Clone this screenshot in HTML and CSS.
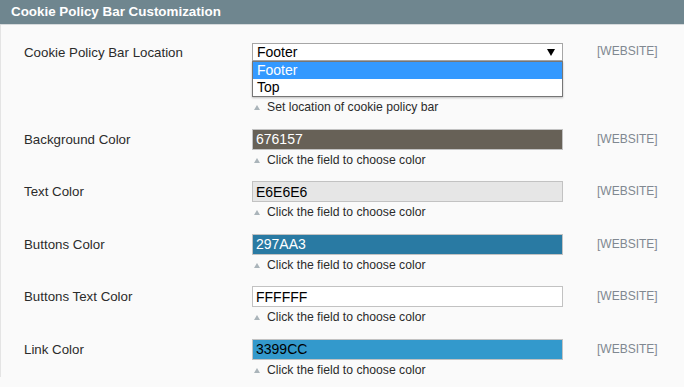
FILE: index.html
```html
<!DOCTYPE html>
<html lang="en">
<head>
    <meta charset="UTF-8">
    <title>Cookie Policy Bar Customization</title>
    <link rel="stylesheet" href="styles.css">
</head>
<body>
<header class="section-head">Cookie Policy Bar Customization</header>
<div class="section-body">
    <div class="row">
        <label class="label label-select">Cookie Policy Bar Location</label>
        <div class="field">
            <div class="select">
                <span>Footer</span>
                <svg class="arrow" width="8" height="7" viewBox="0 0 8 7"><path d="M0 0H8L4 7Z" fill="#000"/></svg>
            </div>
            <ul class="options">
                <li class="active">Footer</li>
                <li>Top</li>
            </ul>
            <p class="note">Set location of cookie policy bar</p>
        </div>
        <span class="scope scope-select">[WEBSITE]</span>
    </div>
    <div class="row">
        <label class="label">Background Color</label>
        <div class="field">
            <input class="color light-text" type="text" value="676157" style="background-color:#676157">
            <p class="note">Click the field to choose color</p>
        </div>
        <span class="scope">[WEBSITE]</span>
    </div>
    <div class="row">
        <label class="label">Text Color</label>
        <div class="field">
            <input class="color" type="text" value="E6E6E6" style="background-color:#E6E6E6">
            <p class="note">Click the field to choose color</p>
        </div>
        <span class="scope">[WEBSITE]</span>
    </div>
    <div class="row">
        <label class="label">Buttons Color</label>
        <div class="field">
            <input class="color light-text" type="text" value="297AA3" style="background-color:#297AA3">
            <p class="note">Click the field to choose color</p>
        </div>
        <span class="scope">[WEBSITE]</span>
    </div>
    <div class="row">
        <label class="label">Buttons Text Color</label>
        <div class="field">
            <input class="color" type="text" value="FFFFFF" style="background-color:#FFFFFF">
            <p class="note">Click the field to choose color</p>
        </div>
        <span class="scope">[WEBSITE]</span>
    </div>
    <div class="row">
        <label class="label">Link Color</label>
        <div class="field">
            <input class="color" type="text" value="3399CC" style="background-color:#3399CC">
            <p class="note">Click the field to choose color</p>
        </div>
        <span class="scope">[WEBSITE]</span>
    </div>
</div>
</body>
</html>
```

FILE: styles.css
```css
/* page */
body {
    margin: 0;
    background-color: #fafafa;
    font-family: "Liberation Sans", Arial, sans-serif;
    color: #2b2b2b;
    overflow: hidden;
}

.section-head {
    height: 24px;
    line-height: 24px;
    padding-left: 11px;
    background-color: #6f868f;
    border-bottom: 1px solid #d6dadc;
    color: #fff;
    font-size: 13.4px;
    font-weight: bold;
}

.section-body {
    padding: 18px 0 0 23px;
    border-left: 1px solid #e4e4e4;
}

.row {
    display: grid;
    grid-template-columns: 228px 311px 34px auto;
    align-items: start;
    margin-bottom: 14.5px;
}

.label {
    grid-column: 1;
    font-size: 13.3px;
    line-height: 21px;
}

.label-select {
    line-height: 19px;
}

.field {
    grid-column: 2;
}

.scope {
    grid-column: 4;
    font-size: 12px;
    line-height: 20px;
    color: #808891;
}

.scope-select {
    line-height: 17px;
}

/* select, open */
.select {
    height: 16px;
    border: 1px solid #a6a6a6;
    background: #fff;
    display: flex;
    align-items: center;
    justify-content: space-between;
    padding: 0 7px 0 4px;
    font-size: 14px;
    color: #000;
}

.arrow {
    margin-top: 1px;
}

.options {
    list-style: none;
    margin: 0;
    padding: 0;
    border: 1px solid #767676;
    background: #fff;
    box-shadow: 0 1px 2px rgba(0, 0, 0, 0.25);
    font-size: 14px;
    color: #000;
}

.options li {
    height: 17px;
    line-height: 17px;
    padding-left: 4px;
}

.options .active {
    background-color: #3399ff;
    color: #fff;
}

/* color inputs */
.color {
    display: block;
    box-sizing: border-box;
    width: 311px;
    height: 21px;
    margin: 0;
    padding: 0 3px;
    border: 1px solid #c2c2c2;
    font-family: "Liberation Sans", Arial, sans-serif;
    font-size: 14px;
    color: #000;
}

.light-text {
    color: #fff;
}

.note {
    margin: 3px 0 0;
    padding-left: 15px;
    position: relative;
    font-size: 12.2px;
    line-height: 14px;
    color: #2b2b2b;
}

.note::before {
    content: "";
    position: absolute;
    left: 2px;
    top: 5px;
    border-left: 3px solid transparent;
    border-right: 3px solid transparent;
    border-bottom: 5px solid #aab4ba;
}
```
